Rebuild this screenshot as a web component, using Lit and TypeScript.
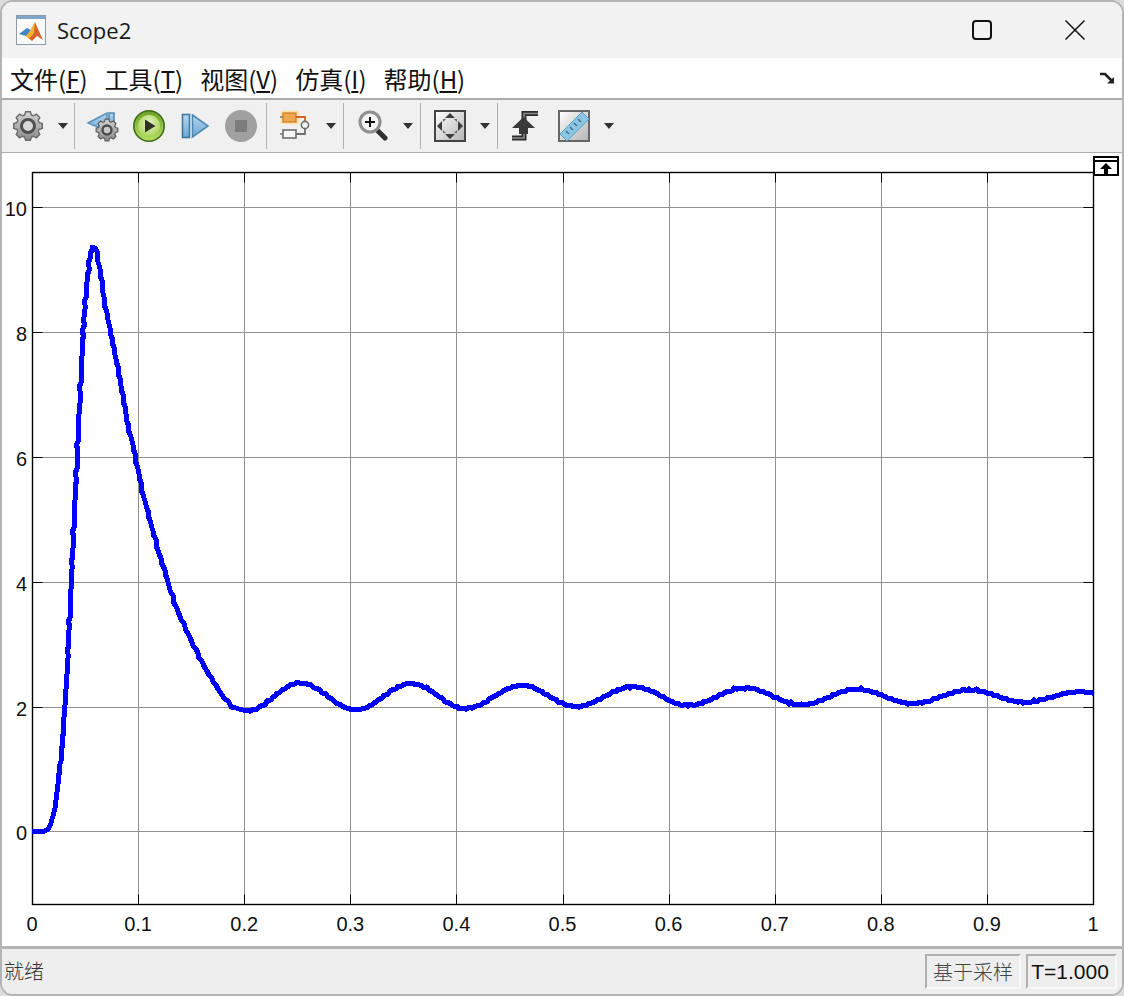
import { LitElement, html, svg, css, CSSResult, TemplateResult } from "lit";
import { customElement } from "lit/decorators.js";

// hand-read curve points, page pixels
const RISE: [number, number][] = [
    [32, 831], [45, 831], [50, 826], [54, 812], [58, 780], [62, 745], [65, 705], [68, 650],
    [71, 585], [74, 520], [77, 457], [80, 395], [83, 332], [86, 290], [89, 263], [91, 250],
    [93, 247], [96, 249], [98, 258], [101, 280], [105, 305], [110.7, 332], [118, 370],
    [125, 410], [135, 457], [142, 490], [150, 520], [158, 550], [168, 582], [178, 612],
    [192, 642], [205, 668], [220, 692], [232, 707], [247, 711],
];

// extremes of the ringing part: [t, value]
const RING: [number, number][] = [
    [0.203, 1.93], [0.253, 2.38], [0.305, 1.95], [0.357, 2.37], [0.408, 1.97], [0.462, 2.34],
    [0.513, 2.0], [0.567, 2.32], [0.618, 2.02], [0.672, 2.3], [0.725, 2.03], [0.778, 2.28],
    [0.83, 2.05], [0.883, 2.27], [0.935, 2.07], [0.988, 2.24], [1, 2.22],
];

const px = (t: number) => 32 + 1061 * t;
const py = (v: number) => 831.3 - 62.4 * v;

function curvePoints(): string {
    const out: string[] = [];
    let n = 0;
    const noise = () => {
        n++;
        return 1.1 * Math.sin(n * 12.9898) * Math.cos(n * 4.1414);
    };
    for (let i = 0; i < RISE.length - 1; i++) {
        const [x0, y0] = RISE[i];
        const [x1, y1] = RISE[i + 1];
        const steps = Math.max(1, Math.round(Math.hypot(x1 - x0, y1 - y0) / 4));
        for (let s = 0; s < steps; s++) {
            const k = s / steps;
            const x = x0 + (x1 - x0) * k + (i > 3 ? noise() : 0);
            out.push(`${Math.round(x)},${Math.round(y0 + (y1 - y0) * k)}`);
        }
    }
    for (let i = 0; i < RING.length - 1; i++) {
        const x0 = px(RING[i][0]);
        const x1 = px(RING[i + 1][0]);
        const y0 = py(RING[i][1]);
        const y1 = py(RING[i + 1][1]);
        for (let x = x0; x < x1; x += 2) {
            const k = (1 - Math.cos((Math.PI * (x - x0)) / (x1 - x0))) / 2;
            out.push(`${Math.round(x)},${Math.round(y0 + (y1 - y0) * k + noise())}`);
        }
    }
    out.push(`1093,${Math.round(py(2.22))}`);
    return out.join(" ");
}

function gearPath(cx: number, cy: number, r: number, teeth = 8): string {
    const parts: string[] = [];
    const inner = r * 0.8;
    for (let i = 0; i < teeth; i++) {
        const a = (i * 2 * Math.PI) / teeth;
        const w = Math.PI / teeth;
        const pts: [number, number][] = [
            [inner, a - w * 0.75],
            [r, a - w * 0.42],
            [r, a + w * 0.42],
            [inner, a + w * 0.75],
        ];
        for (const [d, t] of pts) {
            parts.push(`${parts.length ? "L" : "M"}${(cx + d * Math.cos(t)).toFixed(2)} ${(cy + d * Math.sin(t)).toFixed(2)}`);
        }
    }
    return parts.join(" ") + "Z";
}

const defs = svg`
    <defs>
        <linearGradient id="metal" x1="0" y1="0" x2="0" y2="1">
            <stop offset="0" stop-color="#d4d4d4"></stop>
            <stop offset="1" stop-color="#8a8a8a"></stop>
        </linearGradient>
        <linearGradient id="sheet" x1="0" y1="0" x2="1" y2="1">
            <stop offset="0" stop-color="#ffffff"></stop>
            <stop offset="1" stop-color="#b4b4b4"></stop>
        </linearGradient>
        <linearGradient id="lime" x1="0" y1="0" x2="0" y2="1">
            <stop offset="0" stop-color="#6d9f28"></stop>
            <stop offset="1" stop-color="#b4e064"></stop>
        </linearGradient>
        <radialGradient id="limeCore" cx="0.5" cy="0.4" r="0.6">
            <stop offset="0" stop-color="#eef7cf"></stop>
            <stop offset="1" stop-color="#a6d255"></stop>
        </radialGradient>
        <linearGradient id="sky" x1="0" y1="0" x2="0" y2="1">
            <stop offset="0" stop-color="#b6d8f0"></stop>
            <stop offset="1" stop-color="#6aa6d4"></stop>
        </linearGradient>
    </defs>
`;

const gearIcon = html`<svg class="icon" viewBox="0 0 32 32">
    <path d=${gearPath(16, 16, 14.5)} fill="url(#metal)" stroke="#6a6a6a" stroke-width="1.4"></path>
    <circle cx="16" cy="16" r="6.5" fill="#d8d8d8" stroke="#505050" stroke-width="3"></circle>
</svg>`;

const backIcon = html`<svg class="icon" viewBox="0 0 32 32">
    <path d="M1 13 L20 3 V21 Z" fill="url(#sky)" stroke="#5a92bd" stroke-width="1.5"></path>
    <rect x="22" y="3" width="5" height="14" fill="url(#sky)" stroke="#4f85ae" stroke-width="1.5"></rect>
    <path d=${gearPath(20, 20, 11)} fill="url(#metal)" stroke="#5c5c5c" stroke-width="1.2"></path>
    <circle cx="20" cy="20" r="4.5" fill="#c8c8c8" stroke="#4a4a4a" stroke-width="2.4"></circle>
</svg>`;

const playIcon = html`<svg class="icon" viewBox="0 0 32 32">
    <circle cx="16" cy="16" r="15.2" fill="url(#lime)" stroke="#3f6c16" stroke-width="1.6"></circle>
    <circle cx="16" cy="16" r="11" fill="url(#limeCore)"></circle>
    <path d="M12 9.5 L22.5 16 L12 22.5 Z" fill="#2f3326"></path>
</svg>`;

const stepIcon = html`<svg class="icon" viewBox="0 0 32 32">
    <rect x="3.5" y="4.5" width="7" height="23" fill="url(#sky)" stroke="#3f789f" stroke-width="1.6"></rect>
    <path d="M13.5 5 L29 16 L13.5 27 Z" fill="url(#sky)" stroke="#4f88b0" stroke-width="1.6"></path>
</svg>`;

const stopIcon = html`<svg class="icon" viewBox="0 0 32 32">
    <circle cx="16" cy="16" r="16" fill="#a0a0a0"></circle>
    <rect x="10" y="10" width="12" height="12" fill="#7c7c7c"></rect>
</svg>`;

const blockIcon = html`<svg class="icon" viewBox="0 0 32 32">
    <rect x="0.5" y="0.5" width="19" height="14" rx="2" fill="#fde0ae"></rect>
    <rect x="3" y="3" width="13" height="9" fill="#f0a84c" stroke="#c67a22" stroke-width="1.2"></rect>
    <path d="M16 7 H25 V12" fill="none" stroke="#c9662c" stroke-width="1.8"></path>
    <circle cx="25" cy="15" r="3.6" fill="#f4f4f4" stroke="#6e6e6e" stroke-width="1.6"></circle>
    <path d="M25 19 V24 H16" fill="none" stroke="#6e6e6e" stroke-width="1.8"></path>
    <rect x="3" y="20" width="13" height="8" fill="#f6f6f6" stroke="#6e6e6e" stroke-width="1.6"></rect>
    <path d="M0 24 H3 M0 7 H3" stroke="#777" stroke-width="1.6"></path>
</svg>`;

const zoomIcon = html`<svg class="icon" viewBox="0 0 32 32">
    <path d="M19 19 L28 28" stroke="#2f2f2f" stroke-width="5" stroke-linecap="round"></path>
    <circle cx="13" cy="12" r="10" fill="#f4f4f4" stroke="#8f8f8f" stroke-width="3"></circle>
    <path d="M8 12 H18 M13 7 V17" stroke="#111" stroke-width="2"></path>
</svg>`;

const fitIcon = html`<svg class="icon" viewBox="0 0 32 32">
    <rect x="1" y="1" width="30" height="30" fill="url(#sheet)" stroke="#444" stroke-width="2"></rect>
    <path d="M16 3 L21 8 H11 Z M16 29 L21 24 H11 Z M3 16 L8 11 V21 Z M29 16 L24 11 V21 Z" fill="#3c3c3c"></path>
    <path d="M9 9 L12 9 L9 12 Z M23 9 L20 9 L23 12 Z M9 23 L12 23 L9 20 Z M23 23 L20 23 L23 20 Z" fill="#666"></path>
</svg>`;

const cursorIcon = html`<svg class="icon" viewBox="0 0 32 32">
    <path d="M30 3.5 H16 V28 H4" fill="none" stroke="#2c2c2c" stroke-width="5"></path>
    <path d="M30 3.5 H16 V28 H4" fill="none" stroke="#8c8c8c" stroke-width="1.6"></path>
    <path d="M15.5 7 L27 18 H20 V24 H11 V18 H4 Z" fill="#3a3a3a"></path>
</svg>`;

const rulerIcon = html`<svg class="icon" viewBox="0 0 32 32">
    <rect x="1" y="1" width="30" height="30" fill="url(#sheet)" stroke="#666" stroke-width="2"></rect>
    <path d="M2 24 L24 2 L31 9 L9 31 Z" fill="#8cc6e6" stroke="#5d9dc2" stroke-width="1"></path>
    <path d="M20 9 L23 12 M16 13 L19 16 M12 17 L15 20 M8 21 L11 24" stroke="#4a6c80" stroke-width="1.5"></path>
</svg>`;

@customElement("app-root")
export class AppRoot extends LitElement {
    static get styles(): CSSResult {
        return css`
            :host {
                background: #dcdcdc;
                display: block;
                height: 996px;
                width: 1124px;
            }

            .window {
                background: #fff;
                border: 2px solid #b4b4b4;
                border-radius: 13px;
                box-sizing: border-box;
                display: flex;
                flex-direction: column;
                height: 100%;
                overflow: hidden;
            }

            .title {
                align-items: center;
                background: #f2f2f2;
                display: flex;
                flex: none;
                height: 56px;
                padding-left: 14px;
            }

            .logo {
                height: 30px;
                width: 30px;
            }

            .title-text {
                color: #1a1a1a;
                font: 22px "Open Sans", sans-serif;
                margin-left: 11px;
            }

            .win-btn {
                display: block;
                height: 22px;
                width: 22px;
            }

            .max {
                margin-left: auto;
            }

            .close {
                margin-left: 71px;
                margin-right: 36px;
            }

            .menu {
                align-items: center;
                background: #fff;
                border-bottom: 2px solid #ababab;
                box-sizing: border-box;
                display: flex;
                flex: none;
                font: 24px "Noto Sans CJK SC", "Liberation Sans", sans-serif;
                gap: 17px;
                height: 42px;
                padding-left: 8px;
            }

            .menu span {
                color: #111;
            }

            .overflow {
                height: 12px;
                margin-left: auto;
                margin-right: 7px;
                width: 16px;
            }

            .toolbar {
                align-items: center;
                background: #f0f0f0;
                border-bottom: 1px solid #aeaeae;
                display: flex;
                flex: none;
                height: 52px;
                padding-left: 3px;
            }

            .btn {
                display: flex;
                justify-content: center;
                width: 46px;
            }

            .btn.gap {
                margin-left: 4px;
            }

            .icon {
                display: block;
                filter: blur(0.7px);
                height: 32px;
                overflow: visible;
                width: 32px;
            }

            .arrow {
                display: flex;
                filter: blur(0.4px);
                justify-content: center;
                width: 23px;
            }

            .arrow::before {
                border-left: 5px solid transparent;
                border-right: 5px solid transparent;
                border-top: 6px solid #333;
                content: "";
            }

            .sep {
                align-self: center;
                background: #b0b0b0;
                height: 46px;
                margin: 0 6px 0 1px;
                width: 1px;
            }

            .sep.first {
                margin: 0 5px 0 0;
            }

            .sep.after-stop {
                margin: 0 6px 0 2px;
            }

            .sep.tight {
                margin: 0 3px 0 1px;
            }

            .canvas {
                background: #fff;
                flex: 1;
                min-height: 0;
                overflow: hidden;
            }

            .canvas svg {
                display: block;
            }

            .tick-label {
                fill: #111;
                font: 20px "Liberation Sans", sans-serif;
            }

            .status {
                align-items: center;
                background: #eeeeee;
                border-top: 3px solid #b4b4b4;
                display: flex;
                flex: none;
                font: 300 20px "Noto Sans CJK SC", "Liberation Sans", sans-serif;
                gap: 5px;
                height: 45px;
                padding-right: 5px;
            }

            .ready {
                color: #333;
                margin-left: 2px;
                margin-right: auto;
                padding-bottom: 2px;
            }

            .cell {
                align-items: center;
                border-bottom: 2px solid #f8f8f8;
                border-left: 2px solid #b0b0b0;
                border-right: 2px solid #f8f8f8;
                border-top: 2px solid #b0b0b0;
                box-sizing: border-box;
                display: flex;
                height: 35px;
                justify-content: center;
            }

            .mode {
                color: #444;
                width: 96px;
            }

            .time {
                color: #111;
                font: 21px "Liberation Sans", sans-serif;
                padding-right: 3px;
                width: 91px;
            }
        `;
    }

    private renderPlot(): TemplateResult {
        const xs = [0, 1, 2, 3, 4, 5, 6, 7, 8, 9, 10];
        const ys = [10, 8, 6, 4, 2, 0];
        const L = 32.5;
        const R = 1093.5;
        const T = 172.5;
        const B = 904.5;
        return html`<svg width="1120" height="794" viewBox="2 153 1120 794">
            ${xs.map((i) => {
                const x = Math.round(px(i / 10)) + 0.5;
                return svg`
                    <line x1=${x} x2=${x} y1=${T} y2=${B} stroke="#909090"></line>
                    <line x1=${x} x2=${x} y1=${T} y2=${T + 10} stroke="#000"></line>
                    <line x1=${x} x2=${x} y1=${B - 10} y2=${B} stroke="#000"></line>
                    <text class="tick-label" x=${px(i / 10)} y="931" text-anchor="middle">${i === 0 ? "0" : i === 10 ? "1" : (i / 10).toFixed(1)}</text>
                `;
            })}
            ${ys.map((v) => {
                const y = Math.round(py(v)) + 0.5;
                return svg`
                    <line x1=${L} x2=${R} y1=${y} y2=${y} stroke="#909090"></line>
                    <line x1=${L} x2=${L + 10} y1=${y} y2=${y} stroke="#000"></line>
                    <line x1=${R - 10} x2=${R} y1=${y} y2=${y} stroke="#000"></line>
                    <text class="tick-label" x="27" y=${y + 8} text-anchor="end">${v}</text>
                `;
            })}
            <rect x=${L} y=${T} width=${R - L} height=${B - T} fill="none" stroke="#000" stroke-width="1.4"></rect>
            <polyline points=${curvePoints()} fill="none" stroke="#0000ff" stroke-width="5" stroke-linejoin="round" shape-rendering="crispEdges"></polyline>
            <rect x="1094" y="157" width="24" height="18" fill="#fff" stroke="#000" stroke-width="2"></rect>
            <path d="M1094 161 H1118" stroke="#000" stroke-width="2"></path>
            <path d="M1106 163 L1112 169 H1108 V174 H1104 V169 H1100 Z" fill="#000"></path>
        </svg>`;
    }

    render(): TemplateResult {
        return html`
            <div class="window">
                <svg width="0" height="0" style="position:absolute">${defs}</svg>
                <div class="title">
                    <svg class="logo" viewBox="0 0 30 30">
                        <rect x="0.5" y="0.5" width="29" height="29" fill="#fafafa" stroke="#8e9aa5"></rect>
                        <rect x="1" y="1" width="28" height="3" fill="#7fa6c8"></rect>
                        <path d="M3 19 L11 13 L15 15 L10 21 Z" fill="#3f86c4"></path>
                        <path d="M10 21 L15 15 L19 7 L22 14 L27 25 L21 21 L16 26 Z" fill="#d9622b"></path>
                        <path d="M15 15 L19 7 L18 18 L13 24 L10 21 Z" fill="#f2b32f"></path>
                    </svg>
                    <span class="title-text">Scope2</span>
                    <svg class="win-btn max" viewBox="0 0 22 22">
                        <rect x="2" y="2" width="18" height="18" rx="3" fill="none" stroke="#111" stroke-width="2"></rect>
                    </svg>
                    <svg class="win-btn close" viewBox="0 0 22 22">
                        <path d="M1.5 1.5 L20.5 20.5 M20.5 1.5 L1.5 20.5" stroke="#111" stroke-width="1.5"></path>
                    </svg>
                </div>
                <div class="menu">
                    <span>文件(<u>F</u>)</span>
                    <span>工具(<u>T</u>)</span>
                    <span>视图(<u>V</u>)</span>
                    <span>仿真(<u>I</u>)</span>
                    <span>帮助(<u>H</u>)</span>
                    <svg class="overflow" viewBox="0 0 16 12">
                        <path d="M1 2 H6 L13 9" fill="none" stroke="#222" stroke-width="2.6"></path>
                        <path d="M15 5 V11.5 H8 Z" fill="#222"></path>
                    </svg>
                </div>
                <div class="toolbar">
                    <div class="btn">${gearIcon}</div>
                    <div class="arrow"></div>
                    <div class="sep first"></div>
                    <div class="btn">${backIcon}</div>
                    <div class="btn">${playIcon}</div>
                    <div class="btn">${stepIcon}</div>
                    <div class="btn">${stopIcon}</div>
                    <div class="sep after-stop"></div>
                    <div class="btn">${blockIcon}</div>
                    <div class="arrow"></div>
                    <div class="sep"></div>
                    <div class="btn">${zoomIcon}</div>
                    <div class="arrow"></div>
                    <div class="sep"></div>
                    <div class="btn">${fitIcon}</div>
                    <div class="arrow"></div>
                    <div class="sep tight"></div>
                    <div class="btn">${cursorIcon}</div>
                    <div class="btn gap">${rulerIcon}</div>
                    <div class="arrow"></div>
                </div>
                <div class="canvas">${this.renderPlot()}</div>
                <div class="status">
                    <span class="ready">就绪</span>
                    <div class="cell mode">基于采样</div>
                    <div class="cell time">T=1.000</div>
                </div>
            </div>
        `;
    }
}
